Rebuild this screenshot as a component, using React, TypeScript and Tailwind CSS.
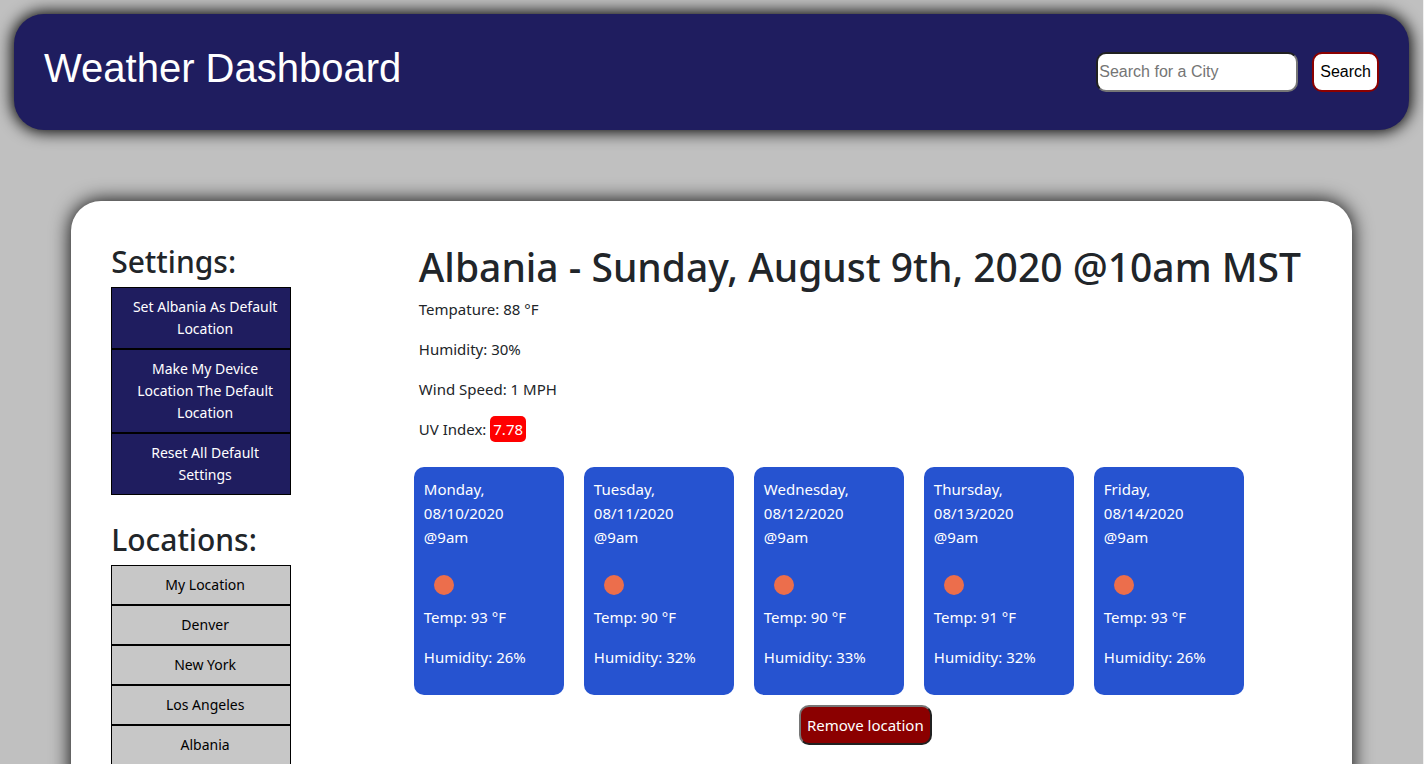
import React from "react";

type ForecastDay = { day: string; date: string; temp: number; humidity: number };

const settings = [
  "Set Albania As Default Location",
  "Make My Device Location The Default Location",
  "Reset All Default Settings",
];

const locations = ["My Location", "Denver", "New York", "Los Angeles", "Albania"];

const forecast: ForecastDay[] = [
  { day: "Monday", date: "08/10/2020", temp: 93, humidity: 26 },
  { day: "Tuesday", date: "08/11/2020", temp: 90, humidity: 32 },
  { day: "Wednesday", date: "08/12/2020", temp: 90, humidity: 33 },
  { day: "Thursday", date: "08/13/2020", temp: 91, humidity: 32 },
  { day: "Friday", date: "08/14/2020", temp: 93, humidity: 26 },
];

function SunIcon() {
  return (
    <svg viewBox="0 0 40 40" className="block size-10" role="img" aria-label="Clear sky">
      <circle cx="20" cy="20" r="10" fill="#ec6e4c" />
    </svg>
  );
}

function Header() {
  return (
    <header className="m-[14px] flex items-center justify-between rounded-[30px] bg-[#1f1d5f] p-[30px] font-['Liberation_Sans',Arial,sans-serif] shadow-[0_0_16px_2px_#000]">
      <h1 className="mb-2 text-[40px] leading-[48px] text-white">Weather Dashboard</h1>
      <form className="flex gap-[14px]" onSubmit={(e) => e.preventDefault()}>
        <input
          type="text"
          aria-label="Search for a City"
          placeholder="Search for a City"
          className="h-10 w-[202px] rounded-[10px] border-2 border-t-[#212121] border-r-[#767676] border-b-[#767676] border-l-[#212121] bg-white px-px text-base text-black placeholder:text-[#757575]"
        />
        <button
          type="submit"
          className="h-10 rounded-[10px] border-2 border-[#8b0000] bg-white px-[6px] text-base text-black"
        >
          Search
        </button>
      </form>
    </header>
  );
}

function MenuList({ items, tone }: { items: string[]; tone: string }) {
  return (
    <ul className="w-[180px]">
      {items.map((item) => (
        <li key={item}>
          <button
            type="button"
            className={`block w-full border border-black py-2 pr-2 pl-4 text-center text-[14px] leading-[22px] ${tone}`}
          >
            {item}
          </button>
        </li>
      ))}
    </ul>
  );
}

function ForecastCard({ day, date, temp, humidity }: ForecastDay) {
  return (
    <li className="w-[150px] rounded-[10px] bg-[#2653d0] p-[10px] text-white">
      <p className="mb-4">
        {day},
        <br />
        {date}
        <br />
        @9am
      </p>
      <SunIcon />
      <p className="mb-4">Temp: {temp} °F</p>
      <p className="mb-4">Humidity: {humidity}%</p>
    </li>
  );
}

export default function App() {
  return (
    <div className="flow-root min-h-screen border-r border-[#f0f0f0] bg-[#c0c0c0] font-['Noto_Sans','Open_Sans',sans-serif] text-[15px] leading-6 text-[#212529]">
      <Header />
      <main className="mx-[5%] mt-[71px] mb-10 rounded-[30px] bg-white p-10 shadow-[0_0_20px_#000]">
        <div className="-mx-[15px] flex">
          <aside className="w-1/4 px-[15px]">
            <h2 className="mb-1 text-[30px] leading-[42px] font-medium">Settings:</h2>
            <MenuList items={settings} tone="bg-[#1f1d5f] text-white" />
            <h2 className="mt-6 mb-1 text-[30px] leading-[42px] font-medium">Locations:</h2>
            <MenuList items={locations} tone="bg-[#c7c7c7] text-black" />
          </aside>
          <section className="w-3/4 px-[15px]">
            <h1 className="mb-1 text-[39px] leading-[52px] font-medium whitespace-nowrap">
              Albania - Sunday, August 9th, 2020 @10am MST
            </h1>
            <p className="mb-4">Tempature: 88 °F</p>
            <p className="mb-4">Humidity: 30%</p>
            <p className="mb-4">Wind Speed: 1 MPH</p>
            <p className="mb-4">
              UV Index: <span className="rounded-[5px] bg-[#ff0000] px-[3px] py-[3px] text-white">7.78</span>
            </p>
            <ul className="-mx-[5px] mt-[26px] flex flex-wrap gap-5">
              {forecast.map((f) => (
                <ForecastCard key={f.day} {...f} />
              ))}
            </ul>
            <button
              type="button"
              className="mx-auto mt-[10px] block h-10 rounded-[10px] border-2 border-t-[#767676] border-r-[#212121] border-b-[#212121] border-l-[#767676] bg-[#8b0000] px-[6px] text-white"
            >
              Remove location
            </button>
          </section>
        </div>
      </main>
    </div>
  );
}
